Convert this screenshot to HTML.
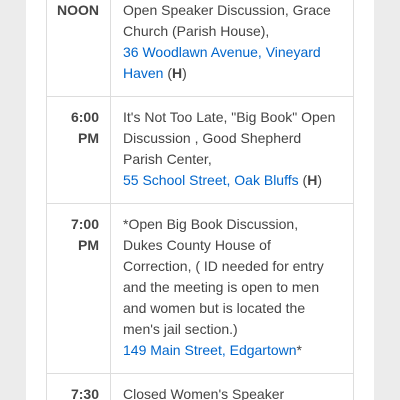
<!DOCTYPE html>
<html><head><style>
html,body{margin:0;width:400px;height:400px;overflow:hidden;}
body{background:#ececec;font-family:"Liberation Sans",Arial,sans-serif;font-size:14px;color:#444;}
.wrap{position:absolute;left:0;top:0;width:400px;height:400px;overflow:hidden;}
.panel{position:absolute;left:26px;top:0;width:348px;height:400px;background:#fff;}
table{position:absolute;left:46px;top:-10px;width:308px;border-collapse:collapse;table-layout:fixed;border-left:1px solid #ddd;border-right:1px solid #ddd;}
td{border-bottom:1px solid #ddd;vertical-align:top;line-height:21px;padding:10px 4px 12px 12px;white-space:nowrap;overflow:hidden;}
td.t{width:53px;text-align:right;font-weight:bold;padding-right:11px;padding-left:0;border-right:1px solid #ddd;}
tr.last td{border-bottom:none;padding-bottom:0;height:15px;}
a{color:#0066cc;text-decoration:none;}
</style></head><body>
<div class="wrap">
<div class="panel"></div>
<table>
<colgroup><col style="width:64px"><col></colgroup>
<tr><td class="t">NOON</td><td>Open Speaker Discussion, Grace<br>Church (Parish House),<br><a>36 Woodlawn Avenue, Vineyard<br>Haven</a> (<b>H</b>)</td></tr>
<tr><td class="t">6:00<br>PM</td><td>It's Not Too Late, "Big Book" Open<br>Discussion , Good Shepherd<br>Parish Center,<br><a>55 School Street, Oak Bluffs</a> (<b>H</b>)</td></tr>
<tr><td class="t">7:00<br>PM</td><td>*Open Big Book Discussion,<br>Dukes County House of<br>Correction, ( ID needed for entry<br>and the meeting is open to men<br>and women but is located the<br>men's jail section.)<br><a>149 Main Street, Edgartown</a>*</td></tr>
<tr class="last"><td class="t">7:30</td><td>Closed Women's Speaker</td></tr>
</table>
</div>
</body></html>
